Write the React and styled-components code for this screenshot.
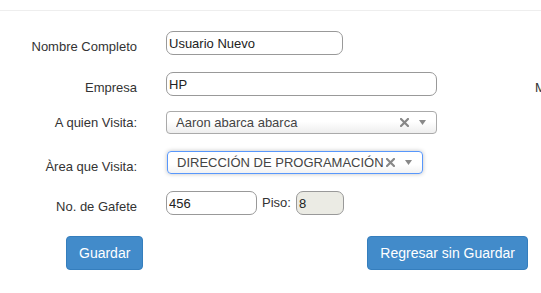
import React from 'react';
import styled, { createGlobalStyle } from 'styled-components';

const GlobalStyle = createGlobalStyle`
  body {
    margin: 0;
    background: #fff;
    font-family: "Liberation Sans", Arial, sans-serif;
    color: #333;
    overflow: hidden;
  }
`;

const Page = styled.div`
  width: 541px;
  height: 293px;
  overflow: hidden;
`;

const TopRule = styled.div`
  height: 10px;
  border-bottom: 1px solid #eee;
`;

const Form = styled.form`
  display: flex;
  flex-direction: column;
  padding-top: 20px;
`;

const Row = styled.div`
  display: flex;
  align-items: flex-start;
  margin-top: ${p => p.$top || 0}px;
  white-space: nowrap;
`;

const Label = styled.label`
  width: 137px;
  margin-right: 29px;
  flex-shrink: 0;
  text-align: right;
  font-size: 13px;
  line-height: 15px;
  padding-top: ${p => p.$shift}px;
  color: #333;
`;

const TextInput = styled.input`
  box-sizing: border-box;
  flex-shrink: 0;
  width: ${p => p.$w}px;
  height: 24px;
  padding: 0 2px;
  border: 1px solid #999;
  border-radius: 7px;
  font-family: inherit;
  font-size: 13px;
  color: #222;
  -webkit-text-fill-color: #222;
  opacity: 1;
  background: ${p => (p.disabled ? '#ebebe4' : '#fff')};
  outline: none;
  margin: 0;
`;

const Inline = styled.span`
  font-size: 13px;
  line-height: 24px;
  margin: 0 5px;
  color: #333;
`;

const SideNote = styled.span`
  flex-shrink: 0;
  font-size: 13px;
  line-height: 15px;
  padding-top: 8px;
  margin-left: 98px;
  color: #333;
`;

const Select = styled.div`
  box-sizing: border-box;
  flex-shrink: 0;
  display: flex;
  align-items: center;
  width: ${p => p.$w}px;
  height: 23px;
  padding: 0 10px 0 9px;
  border: 1px solid ${p => (p.$focus ? '#5897fb' : '#aaa')};
  border-radius: 4px;
  background: ${p =>
    p.$focus
      ? 'linear-gradient(to bottom, #fff 0%, #fff 60%, #f2f2f2 100%)'
      : 'linear-gradient(to top, #eee 0%, #fff 55%)'};
  box-shadow: ${p => (p.$focus ? '0 0 4px rgba(0,0,0,0.25)' : 'none')};
  margin-left: ${p => p.$nudge || 0}px;
`;

const SelectValue = styled.span`
  flex: 1;
  min-width: 0;
  overflow: hidden;
  font-size: 13px;
  line-height: 15px;
  color: #444;
`;

const Clear = styled.svg`
  flex-shrink: 0;
  width: 9px;
  height: 9px;
  margin-right: 10px;
`;

const Arrow = styled.svg`
  flex-shrink: 0;
  width: 7px;
  height: 5px;
`;

const Buttons = styled.div`
  display: flex;
  padding-left: 66px;
  margin-top: 21px;
`;

const Button = styled.button`
  box-sizing: border-box;
  height: 34px;
  padding: 0 12px;
  margin-left: ${p => p.$gap || 0}px;
  background: #428bca;
  border: 1px solid #357ebd;
  border-radius: 4px;
  color: #fff;
  font-family: inherit;
  font-size: 14px;
  cursor: pointer;
`;

const ClearIcon = () => (
  <Clear viewBox="0 0 9 9">
    <path d="M1 1 L8 8 M8 1 L1 8" stroke="#888" strokeWidth="2.2" strokeLinecap="square" />
  </Clear>
);

const ArrowIcon = () => (
  <Arrow viewBox="0 0 7 5">
    <path d="M0 0 H7 L3.5 5 Z" fill="#888" />
  </Arrow>
);

const VisitorForm = () => {
  return (
    <Page>
      <GlobalStyle />
      <TopRule />
      <Form onSubmit={e => e.preventDefault()}>
        <Row>
          <Label $shift={8}>Nombre Completo</Label>
          <TextInput $w={177} defaultValue="Usuario Nuevo" />
        </Row>
        <Row $top={17}>
          <Label $shift={8}>Empresa</Label>
          <TextInput $w={271} defaultValue="HP" />
          <SideNote>M</SideNote>
        </Row>
        <Row $top={15}>
          <Label $shift={4}>A quien Visita:</Label>
          <Select $w={271}>
            <SelectValue>Aaron abarca abarca</SelectValue>
            <ClearIcon />
            <ArrowIcon />
          </Select>
        </Row>
        <Row $top={17}>
          <Label $shift={8}>Àrea que Visita:</Label>
          <Select $w={256} $focus $nudge={1}>
            <SelectValue>DIRECCIÓN DE PROGRAMACIÓN</SelectValue>
            <ClearIcon />
            <ArrowIcon />
          </Select>
        </Row>
        <Row $top={17}>
          <Label $shift={8}>No. de Gafete</Label>
          <TextInput $w={91} defaultValue="456" />
          <Inline>Piso:</Inline>
          <TextInput $w={48} defaultValue="8" disabled />
        </Row>
        <Buttons>
          <Button type="submit">Guardar</Button>
          <Button type="button" $gap={224}>Regresar sin Guardar</Button>
        </Buttons>
      </Form>
    </Page>
  );
};

export default VisitorForm;
